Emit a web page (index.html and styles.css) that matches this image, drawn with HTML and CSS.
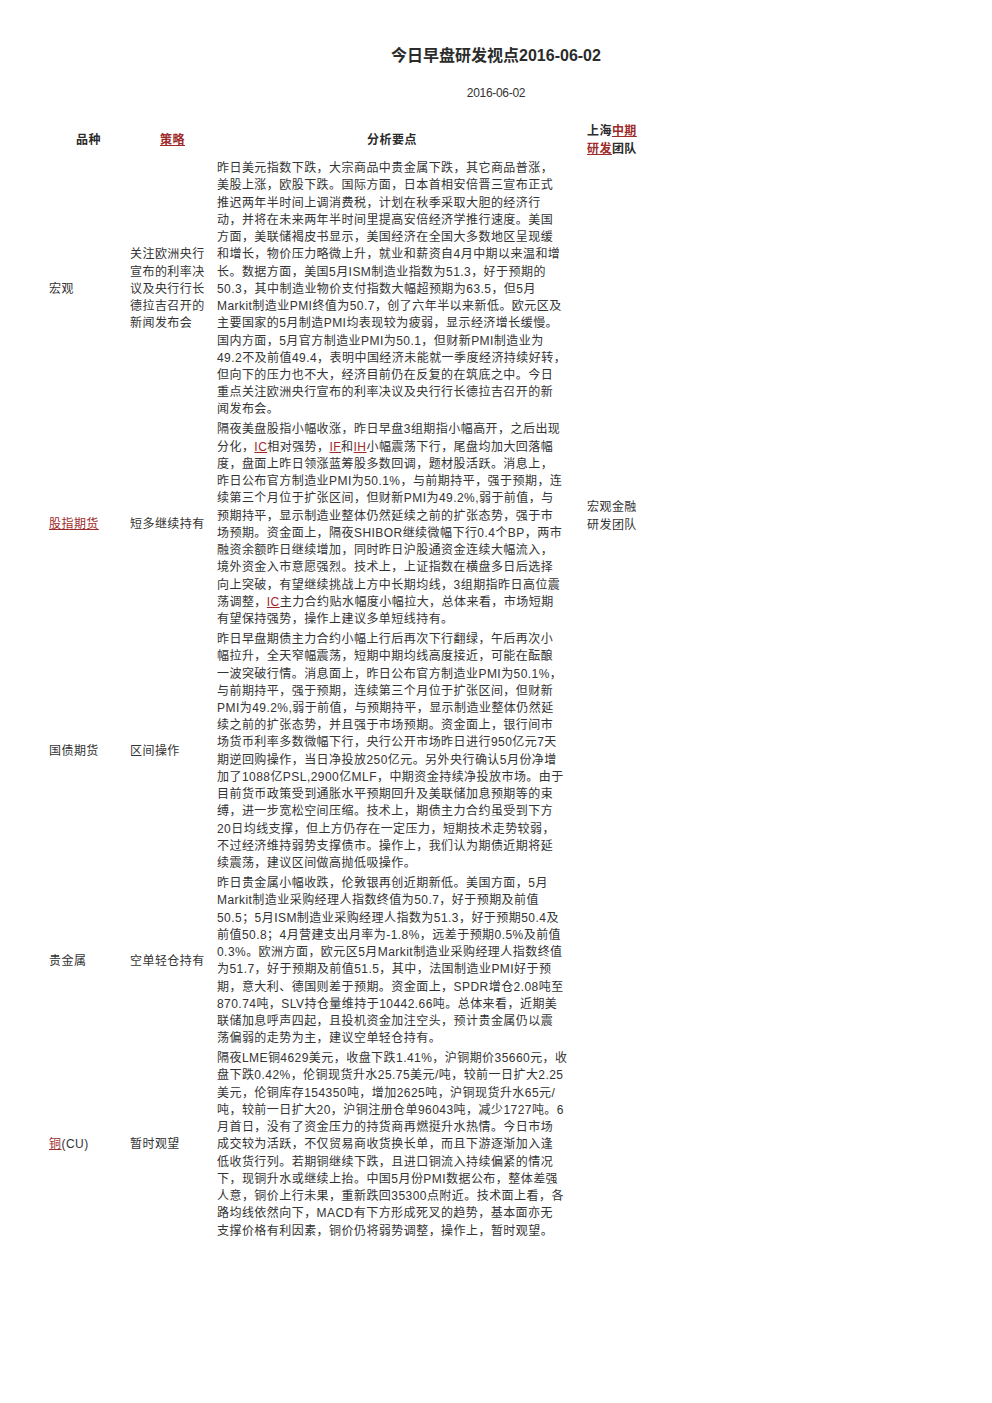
FILE: index.html
```html
<!DOCTYPE html>
<html lang="zh-CN">
<head>
<meta charset="utf-8">
<title>今日早盘研发视点2016-06-02</title>
<link rel="stylesheet" href="styles.css">
</head>
<body>
<div class="page">
  <h1 class="title">今日早盘研发视点2016-06-02</h1>
  <div class="date">2016-06-02</div>
  <table class="report">
    <colgroup>
      <col class="c1"><col class="c2"><col class="c3"><col class="c4">
    </colgroup>
    <thead>
      <tr>
        <th class="h-center">品种</th>
        <th class="h-center"><a class="lnk">策略</a></th>
        <th class="h-center">分析要点</th>
        <th class="team">上海<a class="lnk">中期</a><br><a class="lnk">研发</a>团队</th>
      </tr>
    </thead>
    <tbody>
      <tr>
        <td>宏观</td>
        <td>关注欧洲央行<br>宣布的利率决<br>议及央行行长<br>德拉吉召开的<br>新闻发布会</td>
        <td class="text">昨日美元指数下跌，大宗商品中贵金属下跌，其它商品普涨，<br>美股上涨，欧股下跌。国际方面，日本首相安倍晋三宣布正式<br>推迟两年半时间上调消费税，计划在秋季采取大胆的经济行<br>动，并将在未来两年半时间里提高安倍经济学推行速度。美国<br>方面，美联储褐皮书显示，美国经济在全国大多数地区呈现缓<br>和增长，物价压力略微上升，就业和薪资自4月中期以来温和增<br>长。数据方面，美国5月ISM制造业指数为51.3，好于预期的<br>50.3，其中制造业物价支付指数大幅超预期为63.5，但5月<br>Markit制造业PMI终值为50.7，创了六年半以来新低。欧元区及<br>主要国家的5月制造PMI均表现较为疲弱，显示经济增长缓慢。<br>国内方面，5月官方制造业PMI为50.1，但财新PMI制造业为<br>49.2不及前值49.4，表明中国经济未能就一季度经济持续好转，<br>但向下的压力也不大，经济目前仍在反复的在筑底之中。今日<br>重点关注欧洲央行宣布的利率决议及央行行长德拉吉召开的新<br>闻发布会。</td>
        <td></td>
      </tr>
      <tr>
        <td><a class="lnk">股指期货</a></td>
        <td>短多继续持有</td>
        <td class="text">隔夜美盘股指小幅收涨，昨日早盘3组期指小幅高开，之后出现<br>分化，<a class="lnk">IC</a>相对强势，<a class="lnk">IF</a>和<a class="lnk">IH</a>小幅震荡下行，尾盘均加大回落幅<br>度，盘面上昨日领涨蓝筹股多数回调，题材股活跃。消息上，<br>昨日公布官方制造业PMI为50.1%，与前期持平，强于预期，连<br>续第三个月位于扩张区间，但财新PMI为49.2%,弱于前值，与<br>预期持平，显示制造业整体仍然延续之前的扩张态势，强于市<br>场预期。资金面上，隔夜SHIBOR继续微幅下行0.4个BP，两市<br>融资余额昨日继续增加，同时昨日沪股通资金连续大幅流入，<br>境外资金入市意愿强烈。技术上，上证指数在横盘多日后选择<br>向上突破，有望继续挑战上方中长期均线，3组期指昨日高位震<br>荡调整，<a class="lnk">IC</a>主力合约贴水幅度小幅拉大，总体来看，市场短期<br>有望保持强势，操作上建议多单短线持有。</td>
        <td class="team-body">宏观金融<br>研发团队</td>
      </tr>
      <tr>
        <td>国债期货</td>
        <td>区间操作</td>
        <td class="text">昨日早盘期债主力合约小幅上行后再次下行翻绿，午后再次小<br>幅拉升，全天窄幅震荡，短期中期均线高度接近，可能在酝酿<br>一波突破行情。消息面上，昨日公布官方制造业PMI为50.1%，<br>与前期持平，强于预期，连续第三个月位于扩张区间，但财新<br>PMI为49.2%,弱于前值，与预期持平，显示制造业整体仍然延<br>续之前的扩张态势，并且强于市场预期。资金面上，银行间市<br>场货币利率多数微幅下行，央行公开市场昨日进行950亿元7天<br>期逆回购操作，当日净投放250亿元。另外央行确认5月份净增<br>加了1088亿PSL,2900亿MLF，中期资金持续净投放市场。由于<br>目前货币政策受到通胀水平预期回升及美联储加息预期等的束<br>缚，进一步宽松空间压缩。技术上，期债主力合约虽受到下方<br>20日均线支撑，但上方仍存在一定压力，短期技术走势较弱，<br>不过经济维持弱势支撑债市。操作上，我们认为期债近期将延<br>续震荡，建议区间做高抛低吸操作。</td>
        <td></td>
      </tr>
      <tr>
        <td>贵金属</td>
        <td>空单轻仓持有</td>
        <td class="text">昨日贵金属小幅收跌，伦敦银再创近期新低。美国方面，5月<br>Markit制造业采购经理人指数终值为50.7，好于预期及前值<br>50.5；5月ISM制造业采购经理人指数为51.3，好于预期50.4及<br>前值50.8；4月营建支出月率为-1.8%，远差于预期0.5%及前值<br>0.3%。欧洲方面，欧元区5月Markit制造业采购经理人指数终值<br>为51.7，好于预期及前值51.5，其中，法国制造业PMI好于预<br>期，意大利、德国则差于预期。资金面上，SPDR增仓2.08吨至<br>870.74吨，SLV持仓量维持于10442.66吨。总体来看，近期美<br>联储加息呼声四起，且投机资金加注空头，预计贵金属仍以震<br>荡偏弱的走势为主，建议空单轻仓持有。</td>
        <td></td>
      </tr>
      <tr>
        <td><a class="lnk">铜</a>(CU)</td>
        <td>暂时观望</td>
        <td class="text">隔夜LME铜4629美元，收盘下跌1.41%，沪铜期价35660元，收<br>盘下跌0.42%，伦铜现货升水25.75美元/吨，较前一日扩大2.25<br>美元，伦铜库存154350吨，增加2625吨，沪铜现货升水65元/<br>吨，较前一日扩大20，沪铜注册仓单96043吨，减少1727吨。6<br>月首日，没有了资金压力的持货商再燃挺升水热情。今日市场<br>成交较为活跃，不仅贸易商收货换长单，而且下游逐渐加入逢<br>低收货行列。若期铜继续下跌，且进口铜流入持续偏紧的情况<br>下，现铜升水或继续上抬。中国5月份PMI数据公布，整体差强<br>人意，铜价上行未果，重新跌回35300点附近。技术面上看，各<br>路均线依然向下，MACD有下方形成死叉的趋势，基本面亦无<br>支撑价格有利因素，铜价仍将弱势调整，操作上，暂时观望。</td>
        <td></td>
      </tr>
    </tbody>
  </table>
</div>
</body>
</html>
```
FILE: styles.css
```css
html, body {
  margin: 0;
  padding: 0;
  background: #ffffff;
}
body {
  font-family: "Liberation Sans", "Noto Sans CJK SC", sans-serif;
  color: #333333;
  font-size: 12px;
}
.page {
  width: 992px;
  min-height: 1403px;
}
.title {
  margin: 0;
  padding-top: 47px;
  font-size: 16px;
  line-height: 18px;
  font-weight: bold;
  text-align: center;
  color: #2b2b2b;
  letter-spacing: 0;
}
.date {
  margin-top: 19px;
  font-size: 12px;
  line-height: 18px;
  text-align: center;
  letter-spacing: -0.3px;
}
.report {
  margin-top: 19px;
  margin-left: 47px;
  border-collapse: collapse;
  table-layout: fixed;
  width: 608px;
}
.c1 { width: 81px; }
.c2 { width: 87px; }
.c3 { width: 352px; }
.c4 { width: 88px; }
.report th,
.report td {
  padding: 1.4px 0 1.4px 2px;
  vertical-align: middle;
  text-align: left;
  font-size: 12px;
  line-height: 17.23px;
  letter-spacing: 0.45px;
  white-space: nowrap;
  font-weight: normal;
}
.report th {
  font-weight: bold;
  color: #2b2b2b;
  padding-bottom: 0.4px;
}
.report th.h-center {
  text-align: center;
}
.report th.team {
  padding-left: 20px;
  line-height: 18px;
}
.report td.team-body {
  padding-left: 20px;
  padding-bottom: 18px;
}
.lnk {
  color: #9e2b2b;
  text-decoration: underline;
}
```
